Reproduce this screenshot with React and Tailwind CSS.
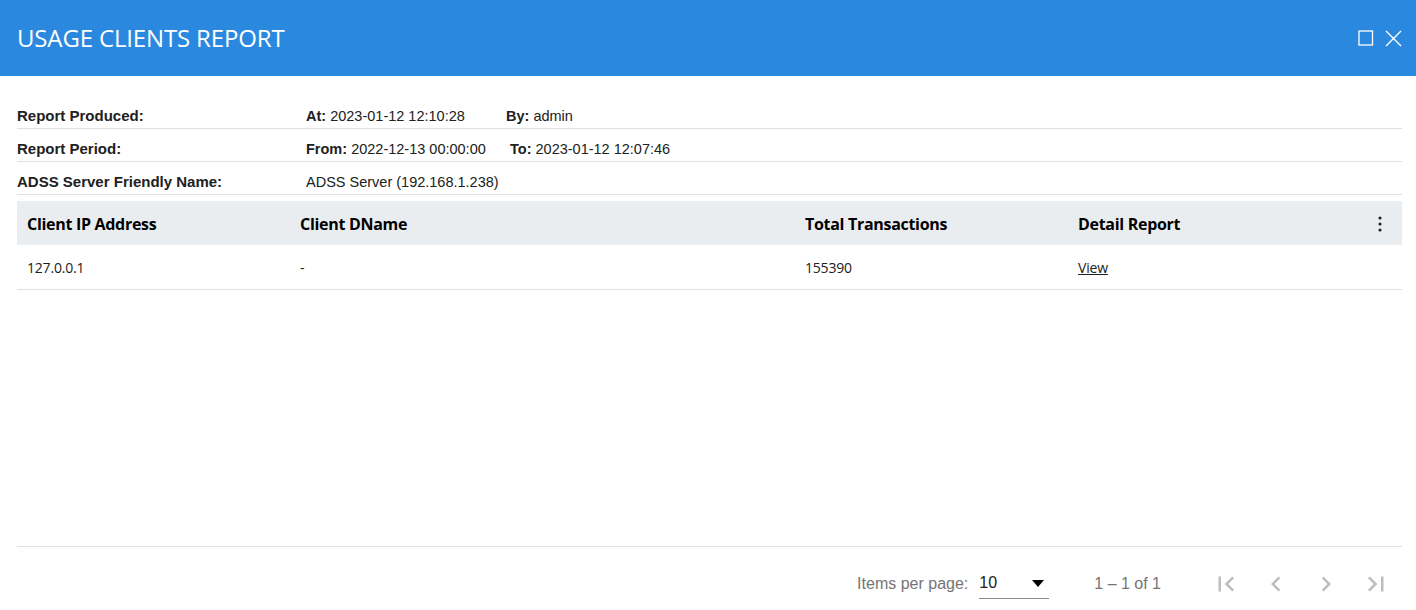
import React from "react";

const info = [
  {
    label: "Report Produced:",
    parts: [
      { k: "At:", v: "2023-01-12 12:10:28", w: "w-[200px]" },
      { k: "By:", v: "admin" },
    ],
  },
  {
    label: "Report Period:",
    parts: [
      { k: "From:", v: "2022-12-13 00:00:00", w: "w-[204px]" },
      { k: "To:", v: "2023-01-12 12:07:46" },
    ],
  },
  {
    label: "ADSS Server Friendly Name:",
    parts: [{ k: "", v: "ADSS Server (192.168.1.238)" }],
  },
];

const rows = [{ ip: "127.0.0.1", dname: "-", total: "155390" }];

function PageIcon({ d }) {
  return (
    <button className="w-[40px] h-[40px] flex items-center justify-center text-[#bdbdbd]">
      <svg width="30" height="30" viewBox="0 0 24 24" fill="currentColor">
        <path d={d} />
      </svg>
    </button>
  );
}

export default function UsageClientsReport() {
  return (
    <div className="h-screen flex flex-col bg-white font-['Liberation_Sans',Arial,sans-serif] text-[#212121]">
      <div className="h-[76px] shrink-0 bg-[#2a89de] flex items-center justify-between pl-[17px] pr-[14px]">
        <h1 className="text-white text-[24px] font-['Open_Sans',sans-serif] tracking-[-0.15px] pb-[1px]">
          USAGE CLIENTS REPORT
        </h1>
        <div className="flex items-center gap-[11px] text-white">
          <svg width="16" height="16" viewBox="0 0 16 16" fill="none" stroke="currentColor" strokeWidth="1.3">
            <rect x="1" y="1" width="13.5" height="14" />
          </svg>
          <svg width="17" height="17" viewBox="0 0 17 17" fill="none" stroke="currentColor" strokeWidth="1.4">
            <path d="M1 1L16 16M16 1L1 16" />
          </svg>
        </div>
      </div>

      <div className="flex-1 pl-[17px] pr-[14px] pt-[20px] text-[14.5px]">
        {info.map((r) => (
          <div key={r.label} className="h-[33px] flex items-center border-b border-[#e0e0e0] pt-[9px]">
            <div className="w-[289px] font-bold text-[15px]">{r.label}</div>
            {r.parts.map((p) => (
              <div key={p.v} className={p.w || ""}>
                {p.k && <span className="font-bold">{p.k} </span>}
                {p.v}
              </div>
            ))}
          </div>
        ))}

        <div className="mt-[6px] font-['Open_Sans',sans-serif]">
          <div className="h-[44px] bg-[#eaedf0] flex items-center text-[16px] font-bold tracking-[-0.3px] text-black pt-[1px]">
            <div className="w-[283px] pl-[10px]">Client IP Address</div>
            <div className="w-[505px]">Client DName</div>
            <div className="w-[273px]">Total Transactions</div>
            <div className="flex-1">Detail Report</div>
            <div className="w-[44px] flex justify-center">
              <svg width="4" height="16" viewBox="0 0 4 16" fill="#222">
                <circle cx="2" cy="2" r="1.6" />
                <circle cx="2" cy="8" r="1.6" />
                <circle cx="2" cy="14" r="1.6" />
              </svg>
            </div>
          </div>
          {rows.map((r) => (
            <div key={r.ip} className="h-[45px] flex items-center border-b border-[#e0e0e0] text-[14px] tracking-[-0.2px]">
              <div className="w-[283px] pl-[10px]">{r.ip}</div>
              <div className="w-[505px]">{r.dname}</div>
              <div className="w-[273px]">{r.total}</div>
              <div className="flex-1">
                <a href="#" className="underline">View</a>
              </div>
            </div>
          ))}
        </div>
      </div>

      <div className="ml-[17px] mr-[14px] border-t border-[#e0e0e0] h-[64px] shrink-0 flex items-center justify-end pt-[10px] pr-[6px] text-[16px] text-[#757575]">
        <span className="mr-[11px]">Items per page:</span>
        <div className="w-[70px] h-[30px] border-b border-[#8a8a8a] flex items-center justify-between">
          <span className="text-[#212121]">10</span>
          <svg width="12" height="7" viewBox="0 0 12 7" className="mr-[5px]" fill="#000">
            <path d="M0 0h12L6 7z" />
          </svg>
        </div>
        <span className="ml-[45px] mr-[45px]">1 – 1 of 1</span>
        <div className="flex items-center gap-[10px]">
          <PageIcon d="M18.41 16.59L13.82 12l4.59-4.59L17 6l-6 6 6 6zM6 6h2v12H6z" />
          <PageIcon d="M15.41 7.41L14 6l-6 6 6 6 1.41-1.41L10.83 12z" />
          <PageIcon d="M10 6L8.59 7.41 13.17 12l-4.58 4.59L10 18l6-6z" />
          <PageIcon d="M5.59 7.41L10.18 12l-4.59 4.59L7 18l6-6-6-6zM16 6h2v12h-2z" />
        </div>
      </div>
    </div>
  );
}
